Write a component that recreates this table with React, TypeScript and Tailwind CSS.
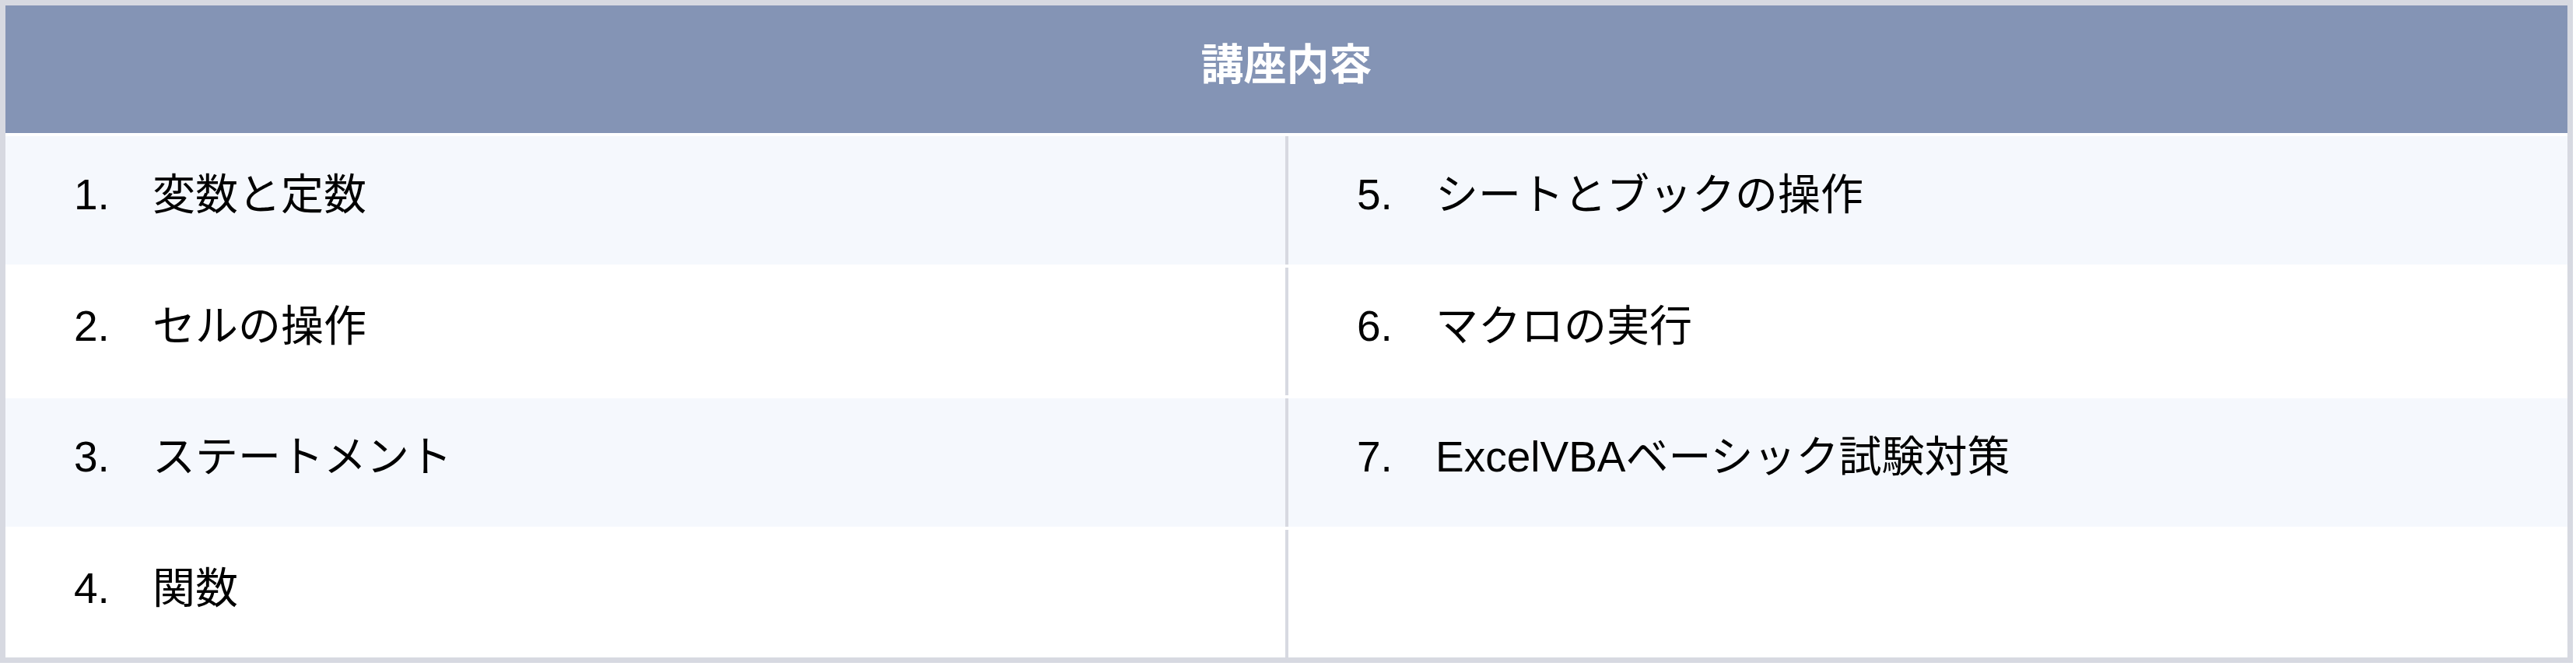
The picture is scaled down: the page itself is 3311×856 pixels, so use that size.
import React from 'react';

const items: [string, string][] = [
  ['1.', '変数と定数'],
  ['5.', 'シートとブックの操作'],
  ['2.', 'セルの操作'],
  ['6.', 'マクロの実行'],
  ['3.', 'ステートメント'],
  ['7.', 'ExcelVBAベーシック試験対策'],
  ['4.', '関数'],
  ['', ''],
];

const rowHeights = ['h-[165px]', 'h-[164px]', 'h-[165px]', 'h-[164px]'];

const Cell = ({ num, label }: { num: string; label: string }) => (
  <div className="flex items-center pl-[88px] pb-[14px] text-[55px] leading-none text-black">
    {num && <span className="w-[101px] shrink-0">{num}</span>}
    <span>{label}</span>
  </div>
);

const App = () => {
  const rows = [0, 1, 2, 3].map((i) => [items[i * 2], items[i * 2 + 1]]);

  return (
    <div className="w-[3307px] bg-white border-[7px] border-[#d7d9e1] flex flex-col gap-[4px] font-['Liberation_Sans','Noto_Sans_CJK_JP',sans-serif]">
      {/* header */}
      <div className="h-[164px] bg-[#8494b5] flex items-center justify-center pb-[12px]">
        <span className="text-white font-bold text-[55px] leading-none">講座内容</span>
      </div>

      {rows.map((row, i) => (
        <div
          key={i}
          className={`flex ${rowHeights[i]} ${i % 2 === 0 ? 'bg-[#f5f8fd]' : 'bg-white'}`}
        >
          <div className="w-[1649px] shrink-0 border-r-4 border-[#d7d9e1] flex">
            <Cell num={row[0][0]} label={row[0][1]} />
          </div>
          <div className="flex-1 flex">
            <Cell num={row[1][0]} label={row[1][1]} />
          </div>
        </div>
      ))}
    </div>
  );
};

export default App;
